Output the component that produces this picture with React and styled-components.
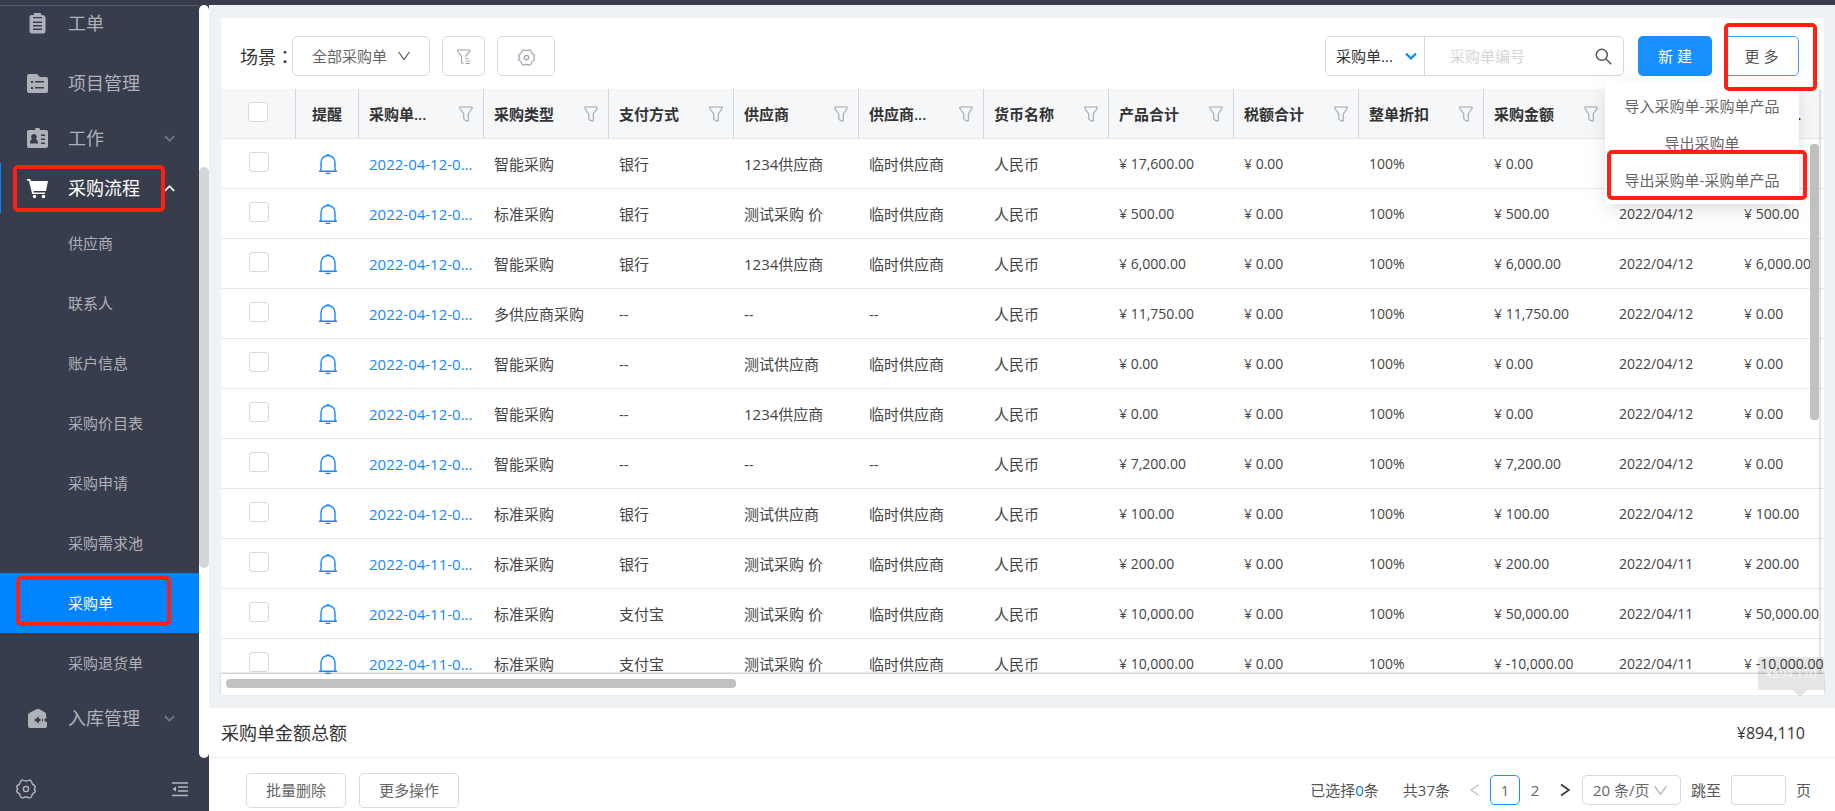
import { useState } from "react";
import styled, { createGlobalStyle, css } from "styled-components";

const menus = [
  { name: "工单", icon: "clipboard", size: 60 },
  { name: "项目管理", icon: "folder", size: 60 },
  { name: "工作", icon: "card", size: 50, arrow: "down" },
  {
    name: "采购流程",
    icon: "cart",
    size: 50,
    arrow: "up",
    open: true,
    children: ["供应商", "联系人", "账户信息", "采购价目表", "采购申请", "采购需求池", "采购单", "采购退货单"],
  },
  { name: "入库管理", icon: "store", size: 50, arrow: "down" },
];

const columns = [
  "采购单...",
  "采购类型",
  "支付方式",
  "供应商",
  "供应商...",
  "货币名称",
  "产品合计",
  "税额合计",
  "整单折扣",
  "采购金额",
  "",
  "已付款...",
];

const orders = [
  ["2022-04-12-0...", "智能采购", "银行", "1234供应商", "临时供应商", "17,600.00", "0.00", "2022/04/12", "0.00"],
  ["2022-04-12-0...", "标准采购", "银行", "测试采购 价", "临时供应商", "500.00", "500.00", "2022/04/12", "500.00"],
  ["2022-04-12-0...", "智能采购", "银行", "1234供应商", "临时供应商", "6,000.00", "6,000.00", "2022/04/12", "6,000.00"],
  ["2022-04-12-0...", "多供应商采购", "--", "--", "--", "11,750.00", "11,750.00", "2022/04/12", "0.00"],
  ["2022-04-12-0...", "智能采购", "--", "测试供应商", "临时供应商", "0.00", "0.00", "2022/04/12", "0.00"],
  ["2022-04-12-0...", "智能采购", "--", "1234供应商", "临时供应商", "0.00", "0.00", "2022/04/12", "0.00"],
  ["2022-04-12-0...", "智能采购", "--", "--", "--", "7,200.00", "7,200.00", "2022/04/12", "0.00"],
  ["2022-04-12-0...", "标准采购", "银行", "测试供应商", "临时供应商", "100.00", "100.00", "2022/04/12", "100.00"],
  ["2022-04-11-0...", "标准采购", "银行", "测试采购 价", "临时供应商", "200.00", "200.00", "2022/04/11", "200.00"],
  ["2022-04-11-0...", "标准采购", "支付宝", "测试采购 价", "临时供应商", "10,000.00", "50,000.00", "2022/04/11", "50,000.00"],
  ["2022-04-11-0...", "标准采购", "支付宝", "测试采购 价", "临时供应商", "10,000.00", "-10,000.00", "2022/04/11", "-10,000.00"],
];

function MenuIcon({ type }) {
  return (
    <svg width="21" height="21" viewBox="0 0 21 21" fill="currentColor" aria-hidden="true">
      {type === "clipboard" && (
        <path
          fillRule="evenodd"
          d="M6 2h1V0h7v2h1.500a3 3 0 0 1 3 2.500V18a2.500 2.500 0 0 1-2.500 2.500H5A2.500 2.500 0 0 1 2.500 18V4A2 2 0 0 1 4.500 2H6zm0 2v1.200h9V4zM6 8.500v1.500h9V8.500zm0 3.500v1.500h9V12zm0 3.500V17h9v-1.500z"
        />
      )}
      {type === "folder" && (
        <path
          fillRule="evenodd"
          d="M2 1h8l3 3h6a2 2 0 0 1 2 2v12a2 2 0 0 1-2 2H2a2 2 0 0 1-2-2V3a2 2 0 0 1 2-2zm2 7v2h2V8zm4 0v1.500h9V8zm-4 6v2h2v-2zm4 0v1.500h9V14z"
        />
      )}
      {type === "card" && (
        <path
          fillRule="evenodd"
          d="M2 2h6a2.500 2.500 0 0 1 5 0h6a2 2 0 0 1 2 2v14a2 2 0 0 1-2 2H2a2 2 0 0 1-2-2V4a2 2 0 0 1 2-2zm5 4a2.800 2.800 0 0 0-1.800 5C3.600 11.700 3 13 3 15.500h8c0-2.500-.7-3.800-2.300-4.500A2.800 2.800 0 0 0 7 6zm7 .5V8h4V6.500zm0 4V12h4v-1.500zm0 4V16h4v-1.500z"
        />
      )}
      {type === "cart" && (
        <>
          <path d="M0 1h3.200l1 2H21l-2 10H6.500l.3 1.500H18V16H5.200L2 3 0 2.600z" />
          <circle cx="7.500" cy="18.500" r="1.700" />
          <circle cx="16.500" cy="18.500" r="1.700" />
        </>
      )}
      {type === "store" && (
        <path
          fillRule="evenodd"
          d="M10 1h2l7 4v3.500h.500V10H19v4h1v4a2 2 0 0 1-2 2H3a2 2 0 0 1-2-2V6l2-1.500zM7 12l5 3.500v-2.300h1.500v-2.400H12V8.500zm8-1.200v2.400h1v-2.400zm2.500 0v2.400H19v-2.400z"
        />
      )}
    </svg>
  );
}

function Chevron({ size = 12, up, weight = 1.5 }) {
  return (
    <svg width={size} height={size} viewBox="0 0 12 12" fill="none" stroke="currentColor" strokeWidth={weight} aria-hidden="true">
      <path d={up ? "M1 8.500l5-5 5 5" : "M1 3.500l5 5 5-5"} />
    </svg>
  );
}

function ThinChevron({ size = 12 }) {
  return (
    <svg width={size} height={size} viewBox="0 0 12 12" fill="none" stroke="currentColor" strokeWidth="1.200" aria-hidden="true">
      <path d="M.6 2L6 9.500 11.400 2" />
    </svg>
  );
}

function Funnel() {
  return (
    <svg width="14" height="16" viewBox="0 0 14 16" fill="none" stroke="currentColor" strokeWidth="1.100" strokeLinejoin="round" aria-hidden="true">
      <path d="M1.200 1h11.600c.6 0 .6 1 .2 1.500L9.300 8v6.300c0 .7-.6 1-1.200.6l-2.700-1.200c-.4-.2-.6-.5-.6-.9V8L.9 2.500C.5 2 .6 1 1.200 1z" />
    </svg>
  );
}

function FunnelList() {
  return (
    <svg width="16" height="16" viewBox="0 0 16 16" fill="none" stroke="currentColor" strokeWidth="1.100" aria-hidden="true">
      <path d="M7.500 14.800l-2-1.100V7.500L1.600 2.300C1.200 1.600 1.400 1 2 1h11.300c.7 0 .9.600.4 1.300L10 6.800V8M9.500 9.500h3M9.500 12h4.500M9.500 14.500h4.500" />
    </svg>
  );
}

function Nut({ size }) {
  return (
    <svg width={size} height={size} viewBox="0 0 20 20" fill="none" stroke="currentColor" strokeWidth="1.400" strokeLinejoin="round" aria-hidden="true">
      <path d="M6.500 1Q10 3 13.500 1Q15 1.300 15.600 2.800Q16 5.500 18.500 6.500Q19.800 7.500 18.800 9Q18 10 18.800 11Q19.800 12.500 18.500 13.500Q16 14.500 15.600 17.200Q15 18.700 13.500 19Q10 17 6.500 19Q5 18.700 4.400 17.200Q4 14.500 1.500 13.500Q.2 12.500 1.200 11Q2 10 1.200 9Q.2 7.500 1.500 6.500Q4 5.500 4.400 2.800Q5 1.300 6.500 1z" />
      <circle cx="10" cy="10" r="2.600" />
    </svg>
  );
}

function Bell() {
  return (
    <svg width="18" height="20" viewBox="0 0 18 20" fill="none" stroke="currentColor" strokeWidth="1.400" aria-hidden="true">
      <path d="M2 17V8.500a7 7 0 0 1 14 0V17M0 17.300h18M6.500 19.400h5M7.500 1h3" />
    </svg>
  );
}

function Picker({ label, options, width, tone, pad, iconSize, iconGap, bare, high }) {
  return (
    <PickerBox $width={width} $bare={bare} $high={high}>
      <PickerField aria-label={label} $pad={pad} $tone={tone}>
        {options.map((item) => (
          <option key={item}>{item}</option>
        ))}
      </PickerField>
      <PickerIcon $gap={iconGap} $blue={bare} $high={high}>
        {bare ? <Chevron weight={2.2} /> : <ThinChevron size={iconSize} />}
      </PickerIcon>
    </PickerBox>
  );
}

function Sidebar() {
  return (
    <Aside>
      <ScrollArea>
        <MenuList>
          {menus.map((menu) => (
            <li key={menu.name}>
              <MenuItem href="#" $size={menu.size} $open={menu.open}>
                <MenuIcon type={menu.icon} />
                <span>{menu.name}</span>
                {menu.arrow && (
                  <MenuArrow $open={menu.open}>
                    <Chevron size={11} weight={2} up={menu.arrow === "up"} />
                  </MenuArrow>
                )}
                {menu.open && <Mark $inset="2px 34px 1px 13px" />}
              </MenuItem>
              {menu.children?.map((child) => (
                <SubItem href="#" key={child} $active={child === "采购单"}>
                  {child}
                  {child === "采购单" && <Mark $inset="3px 28px 7px 16px" />}
                </SubItem>
              ))}
            </li>
          ))}
        </MenuList>
        <SideTrack>
          <SideThumb />
        </SideTrack>
      </ScrollArea>
      <SideFooter>
        <PlainButton aria-label="设置">
          <Nut size={20} />
        </PlainButton>
        <PlainButton aria-label="收起菜单">
          <svg width="16" height="16" viewBox="0 0 16 16" fill="none" stroke="currentColor" strokeWidth="1.300">
            <path d="M0 2h16M6 6h10M6 10h10M0 14.500h16" />
            <path d="M4 5.500v5L.5 8z" fill="currentColor" stroke="none" />
          </svg>
        </PlainButton>
      </SideFooter>
    </Aside>
  );
}

function OrderTable() {
  const [checked, setChecked] = useState([]);

  const toggle = (index) => {
    setChecked(checked.includes(index) ? checked.filter((i) => i !== index) : [...checked, index]);
  };

  return (
    <TableView>
      <Table>
        <colgroup>
          <Col $width={75} />
          <Col $width={63} />
          {columns.map((name, index) => (
            <Col key={index} $width={125} />
          ))}
        </colgroup>
        <thead>
          <tr>
            <HeadCell $center>
              <Checkbox type="checkbox" aria-label="全选" />
            </HeadCell>
            <HeadCell $center>提醒</HeadCell>
            {columns.map((name, index) => (
              <HeadCell key={index}>
                <HeadInner>
                  <span>{name}</span>
                  <Funnel />
                </HeadInner>
              </HeadCell>
            ))}
          </tr>
        </thead>
        <tbody>
          {orders.map(([no, type, pay, supplier, contact, total, amount, date, paid], index) => (
            <tr key={index}>
              <Cell $center>
                <Checkbox
                  type="checkbox"
                  aria-label={`选择第${index + 1}行`}
                  checked={checked.includes(index)}
                  onChange={() => toggle(index)}
                />
              </Cell>
              <Cell $center>
                <BellButton aria-label="提醒">
                  <Bell />
                </BellButton>
              </Cell>
              <Cell>
                <OrderLink href="#">{no}</OrderLink>
              </Cell>
              <Cell>{type}</Cell>
              <Cell>{pay}</Cell>
              <Cell>{supplier}</Cell>
              <Cell>{contact}</Cell>
              <Cell>人民币</Cell>
              <Cell $number>¥ {total}</Cell>
              <Cell $number>¥ 0.00</Cell>
              <Cell $number>100%</Cell>
              <Cell $number>¥ {amount}</Cell>
              <Cell $number>{date}</Cell>
              <Cell $number>¥ {paid}</Cell>
            </tr>
          ))}
        </tbody>
      </Table>
      <FixedEdge />
      <VerticalThumb />
    </TableView>
  );
}

function App() {
  return (
    <Page>
      <GlobalStyle />
      <TopBar />
      <Body>
        <Sidebar />
        <Main>
          <Card>
            <Toolbar>
              <SceneLabel>场景：</SceneLabel>
              <ToolGroup>
                <Picker label="场景" options={["全部采购单"]} width={138} high pad={19} iconSize={12} iconGap={19} tone="#666" />
                <ToolButton $width={43} aria-label="高级筛选">
                  <FunnelList />
                </ToolButton>
                <ToolButton $width={58} aria-label="列设置">
                  <Nut size={17} />
                </ToolButton>
              </ToolGroup>
              <Search>
                <Picker label="搜索字段" options={["采购单..."]} width={99} bare high pad={10} iconGap={7} tone="#333" />
                <SearchInput type="text" placeholder="采购单编号" aria-label="采购单编号" />
                <PlainButton aria-label="搜索">
                  <svg width="17" height="17" viewBox="0 0 17 17" fill="none" stroke="currentColor" strokeWidth="1.500">
                    <circle cx="6.800" cy="6.800" r="5.500" />
                    <path d="M10.800 10.800l5.400 5.400" />
                  </svg>
                </PlainButton>
              </Search>
              <CreateButton>新 建</CreateButton>
              <More>
                <MoreButton aria-haspopup="menu" aria-expanded="true">更 多</MoreButton>
                <Mark $inset="-13px -18px -15px 0" />
                <Dropdown role="menu">
                  <DropdownItem role="menuitem">导入采购单-采购单产品</DropdownItem>
                  <DropdownItem role="menuitem">导出采购单</DropdownItem>
                  <DropdownItem role="menuitem">导出采购单-采购单产品</DropdownItem>
                  <Mark $inset="69px -8px 4px 2px" />
                </Dropdown>
              </More>
            </Toolbar>
            <OrderTable />
            <BottomTrack>
              <BottomThumb />
            </BottomTrack>
          </Card>
          <Summary>
            <span>采购单金额总额</span>
            <Total>
              ¥894,110
              <Tip>¥894,110</Tip>
            </Total>
          </Summary>
          <Footer>
            <FooterButton>批量删除</FooterButton>
            <FooterButton>更多操作</FooterButton>
            <Pager aria-label="分页">
              <Selected>
                已选择<b>0</b>条
              </Selected>
              <Count>共37条</Count>
              <PageButton aria-label="上一页" disabled>
                <svg width="10" height="14" viewBox="0 0 10 14" fill="none" stroke="currentColor" strokeWidth="1.300">
                  <path d="M9 1.500L1 7l8 5.500" />
                </svg>
              </PageButton>
              <PageButton $current>1</PageButton>
              <PageButton>2</PageButton>
              <PageButton aria-label="下一页" $dark>
                <svg width="10" height="14" viewBox="0 0 10 14" fill="none" stroke="currentColor" strokeWidth="1.600">
                  <path d="M1 1.500L9 7l-8 5.500" />
                </svg>
              </PageButton>
              <Picker label="每页条数" options={["20 条/页"]} width={99} pad={10} iconSize={13} iconGap={13} tone="#666" />
              <Jump>
                跳至
                <input type="text" />
                页
              </Jump>
            </Pager>
          </Footer>
        </Main>
      </Body>
    </Page>
  );
}

const GlobalStyle = createGlobalStyle`
  * {
    box-sizing: border-box;
  }

  body {
    margin: 0;
    color: #333;
    font-family: "Open Sans", "Noto Sans CJK SC", sans-serif;
    font-size: 15px;
    line-height: 22px;
  }

  button, input, select {
    font: inherit;
    color: inherit;
  }

  button {
    cursor: pointer;
  }

  a {
    text-decoration: none;
  }

  svg {
    display: block;
    flex: none;
  }
`;

const Page = styled.div`
  display: flex;
  flex-direction: column;
  height: 100vh;
  overflow: hidden;
`;

const TopBar = styled.header`
  flex: none;
  height: 5px;
  background: #383d4d;
`;

const Body = styled.div`
  display: flex;
  flex: 1;
  min-height: 0;
`;

/* red frame drawn around the thing the guide points at */
const Mark = styled.i`
  position: absolute;
  inset: ${({ $inset }) => $inset};
  border: 4px solid #ff2012;
  border-radius: 5px;
  pointer-events: none;
  z-index: 5;
`;

const Aside = styled.aside`
  display: flex;
  flex-direction: column;
  flex: none;
  width: 209px;
  background: #383d4d;
`;

const ScrollArea = styled.div`
  display: flex;
  flex: 1;
  min-height: 0;
  overflow: hidden;
`;

const MenuList = styled.ul`
  flex: 1;
  margin: 0;
  padding: 0;
  list-style: none;
  border-top: 1px solid #585c66;

  /* the list is scrolled a little past its top */
  li:first-child {
    margin-top: -13px;
  }
`;

const MenuItem = styled.a`
  position: relative;
  display: flex;
  align-items: center;
  gap: 20px;
  height: ${({ $size }) => $size}px;
  padding: 0 24px 0 27px;
  font-size: 18px;
  line-height: 26px;
  color: ${({ $open }) => ($open ? "#fff" : "#afb1b8")};
  box-shadow: ${({ $open }) => ($open ? "inset 1px 0 #0084ff" : "none")};
`;

const MenuArrow = styled.span`
  margin-left: auto;
  color: ${({ $open }) => ($open ? "#fff" : "#747883")};
`;

const SubItem = styled.a`
  position: relative;
  display: flex;
  align-items: center;
  height: 60px;
  padding-left: 68px;
  color: ${({ $active }) => ($active ? "#fff" : "#afb1b8")};
  background: ${({ $active }) => ($active ? "#0084ff" : "transparent")};
`;

const SideTrack = styled.div`
  width: 10px;
  padding-top: 162px;
  background: #fff;
  border-radius: 5px;
`;

const SideThumb = styled.div`
  height: 401px;
  background: #d3d7da;
  border-radius: 5px;
`;

const SideFooter = styled.div`
  display: flex;
  align-items: center;
  justify-content: space-between;
  height: 53px;
  padding: 8px 21px 0 16px;
  color: #b5b7bd;
`;

const PlainButton = styled.button`
  padding: 0;
  border: 0;
  background: none;
`;

const Main = styled.main`
  display: flex;
  flex-direction: column;
  flex: 1;
  min-width: 0;
  background: #eef2f5;
`;

const Card = styled.section`
  display: flex;
  flex-direction: column;
  flex: 1;
  min-height: 0;
  margin: 13px 11px 13px 12px;
  background: #fff;
`;

const Toolbar = styled.div`
  display: flex;
  align-items: center;
  flex: none;
  height: 71px;
  padding: 5px 25px 0 19px;
`;

/* the TC face sets the colon in the middle of its square */
const SceneLabel = styled.span`
  width: 52px;
  font-family: "Noto Sans CJK TC", sans-serif;
  font-size: 18px;
  white-space: nowrap;
`;

const ToolGroup = styled.div`
  display: flex;
  gap: 12px;
  margin-right: auto;
`;

const ToolButton = styled.button`
  display: flex;
  align-items: center;
  justify-content: center;
  width: ${({ $width }) => $width}px;
  height: 40px;
  padding: 2px 0 0;
  color: #9aa3ae;
  background: #fff;
  border: 1px solid #d9d9d9;
  border-radius: 5px;
`;

const PickerBox = styled.div`
  position: relative;
  flex: none;
  width: ${({ $width }) => $width}px;
  height: ${({ $high }) => ($high ? 40 : 30)}px;
  border: 1px solid #d9d9d9;
  border-radius: 5px;

  ${({ $bare }) =>
    $bare &&
    css`
      border-width: 0 1px 0 0;
      border-radius: 0;
    `}
`;

const PickerField = styled.select`
  appearance: none;
  width: 100%;
  height: 100%;
  padding: 0 0 0 ${({ $pad }) => $pad}px;
  border: 0;
  background: none;
  color: ${({ $tone }) => $tone};
`;

const PickerIcon = styled.span`
  position: absolute;
  top: 0;
  bottom: 0;
  right: ${({ $gap }) => $gap}px;
  display: flex;
  align-items: center;
  color: ${({ $blue, $high }) => ($blue ? "#0084ff" : $high ? "#555" : "#b5b5b5")};
  pointer-events: none;
`;

const Search = styled.div`
  display: flex;
  align-items: center;
  width: 299px;
  height: 40px;
  padding-right: 11px;
  color: #555;
  border: 1px solid #d9d9d9;
  border-radius: 5px;
`;

const SearchInput = styled.input`
  flex: 1;
  min-width: 0;
  height: 36px;
  padding: 0 0 0 25px;
  border: 0;
  outline: 0;

  &::placeholder {
    color: #d5d5d5;
  }
`;

const CreateButton = styled.button`
  width: 74px;
  height: 40px;
  margin: 0 12px 0 14px;
  padding: 0;
  color: #fff;
  background: #1890ff;
  border: 0;
  border-radius: 5px;
`;

const More = styled.div`
  position: relative;
  z-index: 3;
`;

const MoreButton = styled.button`
  width: 75px;
  height: 40px;
  padding: 0;
  color: #555;
  background: #fff;
  border: 1px solid #40a0ff;
  border-radius: 5px;
`;

const Dropdown = styled.div`
  position: absolute;
  top: 45px;
  right: 0;
  width: 194px;
  padding: 6px 0;
  background: #fff;
  border-radius: 3px;
  box-shadow: 0 6px 16px -6px rgba(0, 0, 0, 0.14), 0 6px 28px rgba(0, 0, 0, 0.06);
`;

const DropdownItem = styled.button`
  display: block;
  width: 100%;
  height: 37px;
  padding: 0;
  color: #666;
  background: none;
  border: 0;
  white-space: nowrap;
`;

const TableView = styled.div`
  position: relative;
  flex: 1;
  min-height: 0;
  overflow: hidden;
`;

const Table = styled.table`
  width: 1638px;
  table-layout: fixed;
  border-collapse: separate;
  border-spacing: 0;
`;

const Col = styled.col`
  width: ${({ $width }) => $width}px;
`;

const HeadCell = styled.th`
  height: 50px;
  padding: 0 10px;
  font-weight: 600;
  text-align: ${({ $center }) => ($center ? "center" : "left")};
  white-space: nowrap;
  background: #f5f7f9;
  border-right: 1px solid #d3d6da;
  border-bottom: 1px solid #e6e8ec;
`;

const HeadInner = styled.div`
  display: flex;
  align-items: center;
  justify-content: space-between;

  svg {
    color: #9aa5b1;
  }
`;

const Cell = styled.td`
  height: 50px;
  padding: 0 10px;
  color: #444;
  font-size: ${({ $number }) => ($number ? 14 : 15)}px;
  text-align: ${({ $center }) => ($center ? "center" : "left")};
  white-space: nowrap;
  border-bottom: 1px solid #e6e8ec;
`;

const Checkbox = styled.input`
  appearance: none;
  display: block;
  width: 20px;
  height: 20px;
  margin: -4px auto 0;
  background: #fff;
  border: 1px solid #d9d9d9;
  border-radius: 3px;

  &:checked {
    background: #1890ff;
    border-color: #1890ff;
  }
`;

const BellButton = styled(PlainButton)`
  display: block;
  margin: 0 auto;
  color: #1687ff;
`;

const OrderLink = styled.a`
  color: #1687ff;
`;

const FixedEdge = styled.div`
  position: absolute;
  top: 0;
  right: 0;
  bottom: 0;
  width: 3px;
  box-shadow: -1px 0 3px rgba(0, 0, 0, 0.2);
`;

const VerticalThumb = styled.div`
  position: absolute;
  top: 55px;
  right: 5px;
  width: 9px;
  height: 276px;
  background: #c1c1c1;
  border-radius: 4px;
`;

const BottomTrack = styled.div`
  position: relative;
  flex: none;
  height: 21px;
  padding: 5px;
  background: #fff;
  box-shadow: 0 -1px 2px rgba(0, 0, 0, 0.25);
`;

const BottomThumb = styled.div`
  width: 32%;
  height: 9px;
  background: #c1c1c1;
  border-radius: 4px;
`;

const Summary = styled.div`
  display: flex;
  align-items: center;
  justify-content: space-between;
  flex: none;
  height: 50px;
  padding: 0 30px 0 12px;
  font-size: 18px;
  background: #fff;
  border-bottom: 1px solid #ececec;
`;

const Total = styled.span`
  position: relative;
  font-size: 16px;
`;

const Tip = styled.span`
  position: absolute;
  right: -19px;
  bottom: 54px;
  width: 66px;
  height: 33px;
  color: rgba(255, 255, 255, 0.7);
  font-size: 12px;
  line-height: 34px;
  text-align: center;
  background: rgba(0, 0, 0, 0.1);
  border-radius: 2px;

  &::after {
    content: "";
    position: absolute;
    top: 100%;
    right: 17px;
    border: 7px solid transparent;
    border-top-color: rgba(0, 0, 0, 0.1);
    border-bottom: 0;
  }
`;

const Footer = styled.footer`
  display: flex;
  align-items: center;
  flex: none;
  gap: 13px;
  height: 53px;
  padding: 11px 24px 0 37px;
  background: #fff;
`;

const FooterButton = styled.button`
  width: 100px;
  height: 35px;
  padding: 0;
  color: #666;
  background: #fff;
  border: 1px solid #d9d9d9;
  border-radius: 5px;
`;

const Pager = styled.nav`
  display: flex;
  align-items: center;
  margin-left: auto;
  color: #555;
`;

const Selected = styled.span`
  margin-right: 24px;

  b {
    color: #0070ff;
    font-weight: 400;
  }
`;

const Count = styled.span`
  margin-right: 10px;
`;

const PageButton = styled.button`
  display: flex;
  align-items: center;
  justify-content: center;
  width: 30px;
  height: 30px;
  padding: 0;
  color: ${({ $dark }) => ($dark ? "#333" : "#666")};
  background: #fff;
  border: 1px solid ${({ $current }) => ($current ? "#1890ff" : "transparent")};
  border-radius: 5px;

  &:disabled {
    color: #bfbfbf;
  }

  &:last-of-type {
    margin-right: 2px;
  }
`;

const Jump = styled.label`
  display: flex;
  align-items: center;
  gap: 10px;
  margin-left: 10px;

  input {
    width: 55px;
    height: 30px;
    border: 1px solid #d9d9d9;
    border-radius: 3px;
  }
`;

export default App;
